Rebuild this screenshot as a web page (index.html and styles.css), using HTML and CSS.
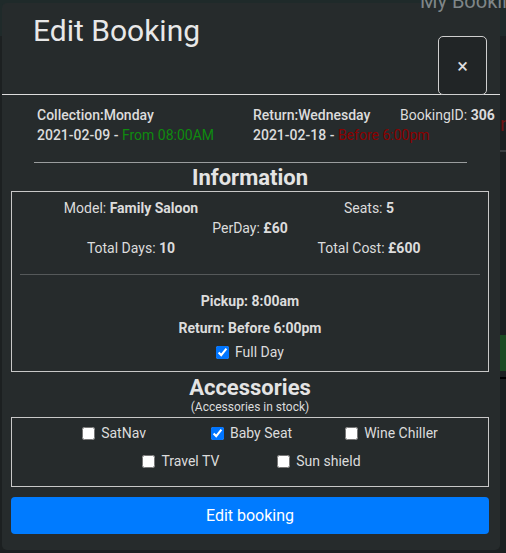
FILE: index.html
```html
<!DOCTYPE html>
<html>
<head>
<meta charset="utf-8">
<link rel="stylesheet" href="styles.css">
</head>
<body>
<div class="page-bg">
  <div class="bg-top"></div>
  <div class="bg-title">My Booking</div>
  <div class="bg-red">n</div>
  <div class="bg-line l1"></div>
  <div class="bg-line l2"></div>
  <div class="bg-green"></div>
</div>
<div class="modal">
  <div class="modal-header">
    <h1 class="modal-title">Edit Booking</h1>
    <button class="close" type="button">×</button>
  </div>
  <div class="modal-body">
    <div class="dates">
      <div class="col">
        <div class="strong">Collection:Monday</div>
        <div class="strong">2021-02-09 - <span class="green">From 08:00AM</span></div>
      </div>
      <div class="col">
        <div class="strong">Return:Wednesday</div>
        <div class="strong">2021-02-18 - <span class="red">Before 6:00pm</span></div>
      </div>
      <div class="col">
        <div class="light">BookingID: <b>306</b></div>
      </div>
    </div>
    <hr class="sep">
    <h2 class="section-title">Information</h2>
    <div class="box info">
      <div class="pair">
        <div>Model: <b>Family Saloon</b></div>
        <div>Seats: <b>5</b></div>
      </div>
      <div class="single">PerDay: <b>£60</b></div>
      <div class="pair">
        <div>Total Days: <b>10</b></div>
        <div>Total Cost: <b>£600</b></div>
      </div>
      <hr class="inner-sep">
      <div class="times">
        <div class="bold-line">Pickup: 8:00am</div>
        <div class="bold-line">Return: Before 6:00pm</div>
        <label class="check"><input type="checkbox" checked> Full Day</label>
      </div>
    </div>
    <h2 class="section-title acc">Accessories</h2>
    <div class="subtitle">(Accessories in stock)</div>
    <div class="box accessories">
      <div class="acc-row r1">
        <label class="check"><input type="checkbox"> SatNav</label>
        <label class="check baby"><input type="checkbox" checked> Baby Seat</label>
        <label class="check wine"><input type="checkbox"> Wine Chiller</label>
      </div>
      <div class="acc-row r2">
        <label class="check"><input type="checkbox"> Travel TV</label>
        <label class="check"><input type="checkbox"> Sun shield</label>
      </div>
    </div>
    <button class="submit" type="button">Edit booking</button>
  </div>
</div>
</body>
</html>
```
FILE: styles.css
```css
* { box-sizing: border-box; }
html, body {
  margin: 0;
  padding: 0;
  width: 506px;
  height: 553px;
  overflow: hidden;
}
body {
  background: #1c2021;
  font-family: Roboto, "Liberation Sans", sans-serif;
  color: #dcdcdc;
  position: relative;
}
.page-bg { position: absolute; inset: 0; }
.bg-top { position: absolute; left: 0; top: 0; width: 506px; height: 36px; background: #1f2a2a; }
.bg-title { position: absolute; left: 420px; top: -9px; font-size: 20px; line-height: 20px; color: #7f8688; z-index: 5; white-space: nowrap; }
.bg-red { position: absolute; left: 500px; top: 112px; font-size: 20px; color: #6e1414; }
.bg-line { position: absolute; left: 500px; width: 6px; height: 2px; }
.bg-line.l1 { top: 150px; background: #3a3e40; }
.bg-line.l2 { top: 377px; background: #000; }
.bg-green { position: absolute; left: 500px; top: 335px; width: 6px; height: 36px; background: #1c4a22; }

.modal {
  position: relative;
  z-index: 2;
  margin: 3px 0 0 2px;
  width: 498px;
  height: 547px;
  background: #262b2c;
  border-radius: 5px;
}
.modal-header {
  height: 92px;
  border-bottom: 1px solid #dddddd;
  display: flex;
  justify-content: space-between;
  align-items: flex-end;
  padding: 0 13px 0 31px;
}
.modal-title {
  align-self: flex-start;
  margin: 10px 0 0;
  font-size: 30px;
  font-weight: 400;
  line-height: 36px;
  color: #e8e8e8;
}
.close {
  width: 49px;
  height: 59px;
  margin-bottom: -1px;
  background: #212526;
  border: 1px solid #cfcfcf;
  border-radius: 5px;
  color: #e0e0e0;
  font-size: 20px;
  font-family: Roboto, sans-serif;
  padding: 0;
  line-height: 1;
}
.modal-body {
  padding: 10px 11px 0 9px;
}
.dates {
  display: grid;
  grid-template-columns: 216px 147px auto;
  padding-left: 26px;
  font-size: 14px;
  line-height: 20px;
  white-space: nowrap;
}
.strong { font-weight: 500; }
.light b { font-weight: 700; }
.green { color: #0f8a0f; font-weight: 400; }
.red { color: #8b0000; font-weight: 400; }
.sep {
  margin: 17px 22px 0 23px;
  border: 0;
  border-top: 1px solid #9a9d9e;
}
.section-title {
  margin: 3px 0 0;
  text-align: center;
  font-size: 22px;
  line-height: 24px;
  font-weight: 700;
  color: #e4e4e4;
}
.box {
  border: 1px solid #c8c8c8;
  margin-top: 1px;
}
.info {
  height: 181px;
  padding-top: 6px;
  font-size: 14px;
  line-height: 20px;
}
.info b { font-weight: 700; }
.pair {
  display: grid;
  grid-template-columns: 1fr 1fr;
  text-align: center;
}
.single { text-align: center; }
.inner-sep {
  margin: 16px 8px 0;
  border: 0;
  border-top: 1px solid #55595a;
}
.times {
  text-align: center;
  padding-top: 13px;
}
.bold-line { font-weight: 700; line-height: 27px; }
.check {
  display: inline-flex;
  align-items: center;
  font-size: 14px;
  gap: 2px;
}
.check input { margin: 0 4px 0 0; width: 13px; height: 13px; }
.acc { margin-top: 4px; }
.subtitle {
  text-align: center;
  font-size: 12px;
  line-height: 14px;
}
.accessories {
  height: 70px;
  padding-top: 1px;
  margin-top: 3px;
}
.acc-row {
  display: flex;
  justify-content: center;
  height: 28px;
  align-items: center;
}
.acc-row.r1 { gap: 60px; padding-left: 20px; }
.acc-row.r1 .baby { margin-left: 5px; }
.acc-row.r1 .wine { margin-left: -7px; }
.acc-row.r2 { gap: 58px; padding-left: 3px; }
.submit {
  display: block;
  width: 100%;
  height: 37px;
  margin-top: 10px;
  border: 0;
  border-radius: 4px;
  background: #007bff;
  color: #ffffff;
  font-family: Roboto, sans-serif;
  font-size: 16px;
}
```
